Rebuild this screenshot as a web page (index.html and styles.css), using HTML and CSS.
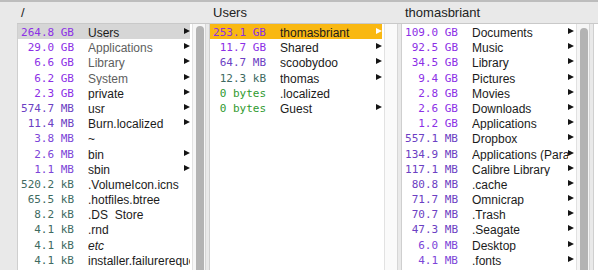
FILE: index.html
```html
<!DOCTYPE html>
<html lang="en">
<head>
  <meta charset="UTF-8">
  <title>Disk Browser</title>
  <link rel="stylesheet" href="styles.css">
</head>
<body>
  <div class="browser">

    <div class="column">
      <div class="col-title">/</div>
      <div class="col-body">
        <div class="list">
          <div class="row row-muted"><span class="size gb">264.8 GB</span><span class="name">Users</span><span class="arrow"></span></div>
          <div class="row"><span class="size gb">29.0 GB</span><span class="name dim">Applications</span><span class="arrow"></span></div>
          <div class="row"><span class="size gb">6.6 GB</span><span class="name dim">Library</span><span class="arrow"></span></div>
          <div class="row"><span class="size gb">6.2 GB</span><span class="name dim">System</span><span class="arrow"></span></div>
          <div class="row"><span class="size gb">2.3 GB</span><span class="name">private</span><span class="arrow"></span></div>
          <div class="row"><span class="size mb">574.7 MB</span><span class="name">usr</span><span class="arrow"></span></div>
          <div class="row"><span class="size mb">11.4 MB</span><span class="name">Burn.localized</span><span class="arrow"></span></div>
          <div class="row"><span class="size mb-small">3.8 MB</span><span class="name">~</span></div>
          <div class="row"><span class="size mb-small">2.6 MB</span><span class="name">bin</span><span class="arrow"></span></div>
          <div class="row"><span class="size mb-small">1.1 MB</span><span class="name">sbin</span><span class="arrow"></span></div>
          <div class="row"><span class="size kb">520.2 kB</span><span class="name">.VolumeIcon.icns</span></div>
          <div class="row"><span class="size kb">65.5 kB</span><span class="name">.hotfiles.btree</span></div>
          <div class="row"><span class="size kb">8.2 kB</span><span class="name">.DS_Store</span></div>
          <div class="row"><span class="size kb">4.1 kB</span><span class="name">.rnd</span></div>
          <div class="row"><span class="size kb">4.1 kB</span><span class="name link">etc</span></div>
          <div class="row"><span class="size kb">4.1 kB</span><span class="name">installer.failurerequests</span></div>
        </div>
        <div class="scroller"><div class="thumb"></div></div>
      </div>
    </div>

    <div class="column">
      <div class="col-title">Users</div>
      <div class="col-body">
        <div class="list">
          <div class="row row-active"><span class="size gb">253.1 GB</span><span class="name">thomasbriant</span><span class="arrow"></span></div>
          <div class="row"><span class="size gb">11.7 GB</span><span class="name">Shared</span><span class="arrow"></span></div>
          <div class="row"><span class="size mb">64.7 MB</span><span class="name">scoobydoo</span><span class="arrow"></span></div>
          <div class="row"><span class="size kb">12.3 kB</span><span class="name">thomas</span><span class="arrow"></span></div>
          <div class="row"><span class="size bytes">0 bytes</span><span class="name">.localized</span></div>
          <div class="row"><span class="size bytes">0 bytes</span><span class="name">Guest</span><span class="arrow"></span></div>
        </div>
        <div class="scroller scroller-empty"></div>
      </div>
    </div>

    <div class="column">
      <div class="col-title">thomasbriant</div>
      <div class="col-body">
        <div class="list">
          <div class="row"><span class="size gb">109.0 GB</span><span class="name">Documents</span><span class="arrow"></span></div>
          <div class="row"><span class="size gb">92.5 GB</span><span class="name">Music</span><span class="arrow"></span></div>
          <div class="row"><span class="size gb">34.5 GB</span><span class="name">Library</span><span class="arrow"></span></div>
          <div class="row"><span class="size gb">9.4 GB</span><span class="name">Pictures</span><span class="arrow"></span></div>
          <div class="row"><span class="size gb">2.8 GB</span><span class="name">Movies</span><span class="arrow"></span></div>
          <div class="row"><span class="size gb">2.6 GB</span><span class="name">Downloads</span><span class="arrow"></span></div>
          <div class="row"><span class="size gb">1.2 GB</span><span class="name">Applications</span><span class="arrow"></span></div>
          <div class="row"><span class="size mb">557.1 MB</span><span class="name">Dropbox</span><span class="arrow"></span></div>
          <div class="row"><span class="size mb">134.9 MB</span><span class="name">Applications (Parallels)</span><span class="arrow"></span></div>
          <div class="row"><span class="size mb">117.1 MB</span><span class="name">Calibre Library</span><span class="arrow"></span></div>
          <div class="row"><span class="size mb">80.8 MB</span><span class="name">.cache</span><span class="arrow"></span></div>
          <div class="row"><span class="size mb">71.7 MB</span><span class="name">Omnicrap</span><span class="arrow"></span></div>
          <div class="row"><span class="size mb">70.7 MB</span><span class="name">.Trash</span><span class="arrow"></span></div>
          <div class="row"><span class="size mb">47.3 MB</span><span class="name">.Seagate</span><span class="arrow"></span></div>
          <div class="row"><span class="size mb-small">6.0 MB</span><span class="name">Desktop</span><span class="arrow"></span></div>
          <div class="row"><span class="size mb-small">4.1 MB</span><span class="name">.fonts</span><span class="arrow"></span></div>
        </div>
        <div class="scroller"><div class="thumb thumb-low"></div></div>
      </div>
    </div>

    <div class="column column-last">
      <div class="col-title"></div>
      <div class="col-body">
        <div class="list"></div>
      </div>
    </div>

  </div>
</body>
</html>
```

FILE: styles.css
```css
* {
  margin: 0;
  padding: 0;
  box-sizing: border-box;
}

body {
  height: 270px;
  overflow: hidden;
  background: #e9e9e9;
  border-top: 2px solid #bdbdbd;
  font-family: "Liberation Sans", Arial, sans-serif;
  color: #1b1b1b;
}

.browser {
  display: flex;
  padding-left: 17px;
  height: 268px;
  overflow: hidden;
}

.column {
  width: 192px;
  flex: none;
  display: flex;
  flex-direction: column;
}

.column-last {
  flex: 1;
  width: auto;
}

.col-title {
  height: 21px;
  line-height: 21px;
  padding-left: 4px;
  font-size: 13px;
  color: #222;
  white-space: nowrap;
}

.col-body {
  flex: 1;
  display: flex;
  border-top: 1px solid #c9c9c9;
  min-height: 0;
  overflow: hidden;
}

.list {
  width: 175px;
  flex: none;
  background: white;
  border-left: 1px solid #cfcfcf;
  padding-right: 2px;
  overflow: hidden;
}

.column-last .list {
  flex: 1;
  width: auto;
}

.row {
  display: flex;
  height: 15.2px;
  padding-top: 3px;
  line-height: 12.2px;
}

.row-muted {
  background: #d6d6d6;
}

.row-active {
  background: #f9b812;
}

.row-active .arrow {
  border-left-color: white;
}

.size {
  width: 56px;
  flex: none;
  text-align: right;
  font-family: "DejaVu Sans Mono", "Liberation Mono", monospace;
  font-size: 11px;
  white-space: pre;
}

.gb { color: #8c2fe6; }
.mb { color: #6b40c3; }
.mb-small { color: #7c45d8; }
.kb { color: #3e6a61; }
.bytes { color: #2f9a2f; }

.name {
  flex: 1;
  min-width: 0;
  margin-left: 14px;
  font-size: 12px;
  white-space: nowrap;
  overflow: hidden;
}

.name.dim {
  color: #5e5e5e;
}

.name.link {
  font-style: italic;
}

.arrow {
  flex: none;
  width: 0;
  height: 0;
  margin-top: 1px;
  border-left: 6px solid #151515;
  border-top: 3.5px solid transparent;
  border-bottom: 3.5px solid transparent;
}

.scroller {
  width: 14px;
  flex: none;
  margin-right: 3px;
  background: #f6f6f6;
  border-left: 1px solid #e2e2e2;
  border-right: 1px solid #d6d6d6;
  padding: 2px 0 0 3px;
  overflow: hidden;
}

.scroller-empty {
  background: #fafafa;
}

.thumb {
  width: 8px;
  height: 260px;
  background: #b3b3b3;
  border-radius: 4px;
}

.thumb-low {
  margin-top: 2px;
}
```
